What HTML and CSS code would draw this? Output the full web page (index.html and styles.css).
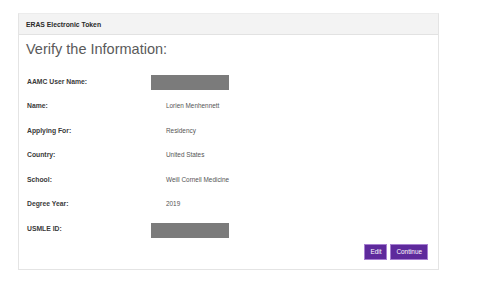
FILE: index.html
```html
<!DOCTYPE html>
<html>
<head>
<meta charset="utf-8">
<link rel="stylesheet" href="styles.css">
</head>
<body>
<div class="panel">
  <div class="panel-head">ERAS Electronic Token</div>
  <div class="panel-body">
    <h1 class="title">Verify the Information:</h1>
    <div class="rows">
      <div class="label">AAMC User Name:</div><div class="value"><span class="redact"></span></div>
      <div class="label">Name:</div><div class="value text">Lorien Menhennett</div>
      <div class="label">Applying For:</div><div class="value text">Residency</div>
      <div class="label">Country:</div><div class="value text">United States</div>
      <div class="label">School:</div><div class="value text">Weill Cornell Medicine</div>
      <div class="label">Degree Year:</div><div class="value text">2019</div>
      <div class="label">USMLE ID:</div><div class="value"><span class="redact low"></span></div>
    </div>
    <div class="actions">
      <button class="btn">Edit</button>
      <button class="btn">Continue</button>
    </div>
  </div>
</div>
</body>
</html>
```

FILE: styles.css
```css
html, body {
  margin: 0;
  padding: 0;
  background: #ffffff;
}
body {
  padding: 13px 0 0 18px;
  font-family: "Liberation Sans", Arial, sans-serif;
}
.panel {
  width: 419px;
  border: 1px solid #e4e4e4;
  border-top: 1px solid #ececec;
  background: #fff;
}
.panel-head {
  height: 21px;
  box-sizing: border-box;
  padding: 0 7px;
  background: #f3f3f3;
  border-bottom: 1px solid #e2e2e2;
  font-size: 6.8px;
  font-weight: bold;
  color: #2a2a2a;
  display: flex;
  align-items: center;
}
.panel-body {
  padding: 4px 10px 9px 7px;
}
.title {
  margin: 0 0 10px 0;
  font-size: 14.5px;
  line-height: 20px;
  font-weight: normal;
  color: #5a5a5a;
}
.rows {
  display: grid;
  grid-template-columns: 125px 1fr;
  grid-auto-rows: 24.5px;
  align-items: center;
}
.label {
  font-size: 6.8px;
  font-weight: bold;
  color: #3a3a3a;
  padding-left: 1px;
}
.value {
  font-size: 6.4px;
  color: #555;
  display: flex;
  align-items: center;
}
.value.text {
  padding-left: 15px;
}
.redact {
  display: block;
  width: 78px;
  height: 15px;
  background: #7b7b7b;
  margin-top: 2px;
}
.redact.low {
  margin-top: 5px;
}
.actions {
  display: flex;
  justify-content: flex-end;
  gap: 3px;
  margin-top: 3px;
}
.btn {
  height: 16px;
  box-sizing: border-box;
  padding: 0 5px;
  background: #5e2a9c;
  border: 1px solid #a77fd1;
  color: #fff;
  font-family: "Liberation Sans", Arial, sans-serif;
  font-size: 6.4px;
  border-radius: 0;
  margin: 0;
}
```
